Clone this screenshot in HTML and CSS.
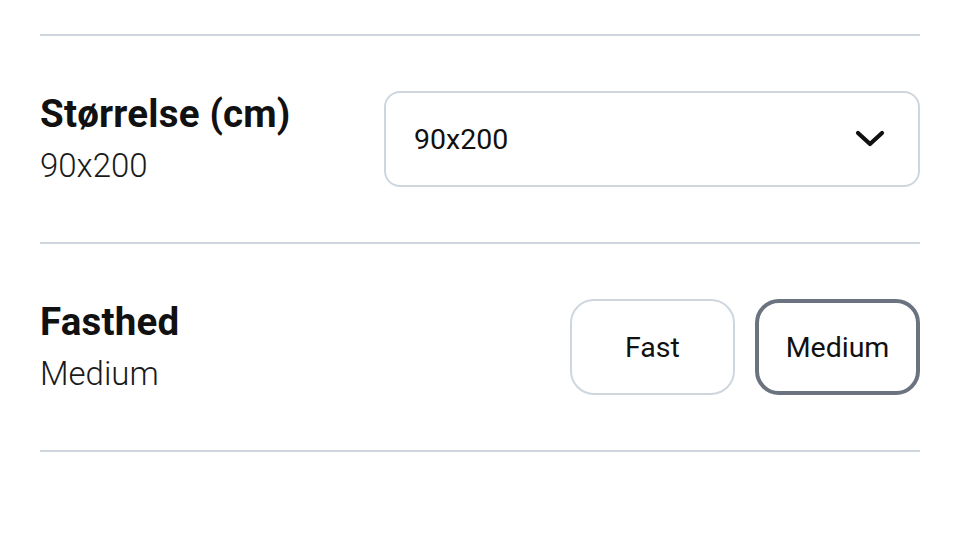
FILE: index.html
```html
<!DOCTYPE html>
<html lang="da">
<head>
<meta charset="utf-8">
<link rel="stylesheet" href="styles.css">
</head>
<body>
<div class="options">
  <div class="row">
    <div class="label">
      <div class="title">Størrelse (cm)</div>
      <div class="value">90x200</div>
    </div>
    <div class="select">
      <span class="select-text">90x200</span>
      <svg class="chevron" width="30" height="18" viewBox="0 0 30 18"><path d="M3 3 L15 14 L27 3" fill="none" stroke="#111" stroke-width="4.2" stroke-linecap="round" stroke-linejoin="round"/></svg>
    </div>
  </div>
  <div class="row">
    <div class="label">
      <div class="title">Fasthed</div>
      <div class="value">Medium</div>
    </div>
    <div class="choices">
      <div class="choice">Fast</div>
      <div class="choice active">Medium</div>
    </div>
  </div>
</div>
</body>
</html>
```
FILE: styles.css
```css
html, body {
  margin: 0;
  padding: 0;
  background: #fff;
}
body {
  font-family: Roboto, "Liberation Sans", sans-serif;
  color: #111;
}
.options {
  padding: 34px 40px 0;
}
.row {
  border-top: 2px solid #cfd6de;
  height: 206px;
  display: flex;
  align-items: center;
  justify-content: space-between;
}
.row:last-child {
  border-bottom: 2px solid #cfd6de;
}
.label {
  display: flex;
  flex-direction: column;
}
.title {
  font-size: 38.5px;
  font-weight: 700;
  line-height: 44px;
  letter-spacing: 0.2px;
}
.value {
  font-size: 33px;
  font-weight: 300;
  line-height: 40px;
  margin-top: 10px;
  color: #1a1a1a;
}
.select {
  border: 2px solid #cfd6de;
  border-radius: 16px;
  display: flex;
  align-items: center;
  justify-content: space-between;
  padding: 0 33px 0 28px;
  box-sizing: border-box;
  width: 536px;
  height: 96px;
}
.select-text {
  font-size: 28.5px;
  font-weight: 400;
}
.chevron {
  display: block;
}
.choices {
  display: flex;
  gap: 20px;
}
.choice {
  width: 165px;
  height: 96px;
  box-sizing: border-box;
  border: 2px solid #cfd6de;
  border-radius: 24px;
  display: flex;
  align-items: center;
  justify-content: center;
  font-size: 28.5px;
  font-weight: 400;
}
.choice.active {
  border: 4px solid #6b7380;
}
```
